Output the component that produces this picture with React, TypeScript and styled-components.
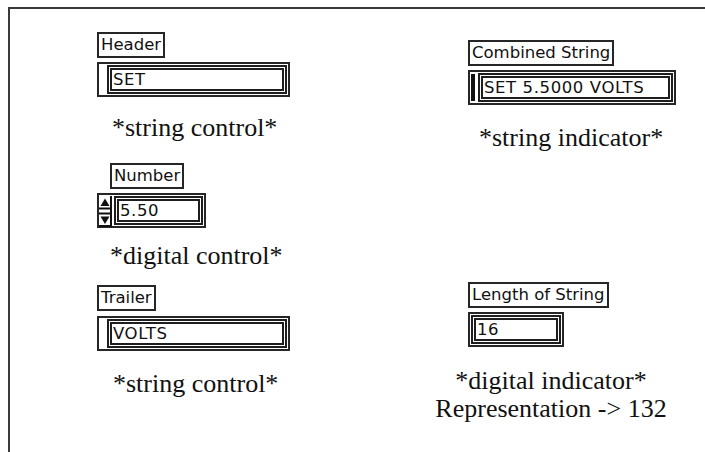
import React from "react";
import styled, { createGlobalStyle } from "styled-components";

const Global = createGlobalStyle`
  html, body { margin: 0; padding: 0; background: #ffffff; }
  body { width: 705px; height: 452px; overflow: hidden; }
`;

const Frame = styled.div`
  margin: 7px 0 0 8px;
  height: 445px;
  box-sizing: border-box;
  border-top: 2px solid #3a3a3a;
  border-left: 2px solid #3a3a3a;
  display: flex;
  align-items: flex-start;
`;

const Column = styled.div<{ $left: number; $width: number }>`
  margin-left: ${(p) => p.$left}px;
  width: ${(p) => p.$width}px;
  display: flex;
  flex-direction: column;
  align-items: flex-start;
`;

const Label = styled.div<{ $top: number; $indent?: number }>`
  margin-top: ${(p) => p.$top}px;
  margin-left: ${(p) => p.$indent ?? 0}px;
  border: 2px solid #262626;
  padding: 0 2px;
  height: 22px;
  line-height: 22px;
  font-family: "DejaVu Sans", sans-serif;
  font-size: 16.5px;
  color: #111;
  white-space: nowrap;
`;

const Field = styled.div<{ $top: number; $width: number; $padLeft: number }>`
  margin-top: ${(p) => p.$top}px;
  width: ${(p) => p.$width}px;
  height: 35px;
  box-sizing: border-box;
  border: 2px solid #262626;
  padding: 1px 1px 1px ${(p) => p.$padLeft}px;
  display: flex;
  align-items: stretch;
`;

const Display = styled.div`
  flex: 1;
  border: 5px double #1e1e1e;
  padding-left: 1px;
  font-family: "DejaVu Sans", sans-serif;
  font-size: 16.5px;
  line-height: 19px;
  letter-spacing: 0.6px;
  color: #111;
  white-space: nowrap;
  overflow: hidden;
`;

const IndicatorBar = styled.div`
  width: 4px;
  margin: 1px 3px 1px 0;
  background: #111;
`;

const Arrows = styled.svg`
  width: 13px;
  height: 31px;
  margin-right: 2px;
  flex: none;
`;

const Caption = styled.div<{ $top: number; $indent?: number }>`
  margin-top: ${(p) => p.$top}px;
  margin-left: ${(p) => p.$indent ?? 0}px;
  font-family: "Liberation Serif", "Times New Roman", serif;
  font-size: 26px;
  line-height: 28px;
  color: #111;
  white-space: nowrap;
`;

const CenteredCaption = styled(Caption)`
  width: 232px;
  text-align: center;
`;

function IncDec() {
  return (
    <Arrows viewBox="0 0 13 31">
      <rect x="11" y="0" width="2" height="31" fill="#111" />
      <polygon points="1.5,10 6,2.5 10.5,10" fill="#111" />
      <rect x="0" y="11.5" width="11" height="2" fill="#111" />
      <rect x="0" y="16.5" width="11" height="2" fill="#111" />
      <polygon points="1.5,20.5 10.5,20.5 6,28" fill="#111" />
      <rect x="0" y="29" width="11" height="2" fill="#111" />
    </Arrows>
  );
}

export default function App() {
  return (
    <>
      <Global />
      <Frame>
        <Column $left={87} $width={210}>
          <Label $top={23}>Header</Label>
          <Field $top={4} $width={193} $padLeft={8}>
            <Display>SET</Display>
          </Field>
          <Caption $top={17} $indent={15}>*string control*</Caption>

          <Label $top={21} $indent={13}>Number</Label>
          <Field $top={4} $width={109} $padLeft={0}>
            <IncDec />
            <Display>5.50</Display>
          </Field>
          <Caption $top={14} $indent={13}>*digital control*</Caption>

          <Label $top={15}>Trailer</Label>
          <Field $top={5} $width={193} $padLeft={8}>
            <Display>VOLTS</Display>
          </Field>
          <Caption $top={19} $indent={16}>*string control*</Caption>
        </Column>

        <Column $left={161} $width={230}>
          <Label $top={31}>Combined String</Label>
          <Field $top={4} $width={208} $padLeft={1}>
            <IndicatorBar />
            <Display>SET 5.5000 VOLTS</Display>
          </Field>
          <Caption $top={19} $indent={11}>*string indicator*</Caption>

          <Label $top={130}>Length of String</Label>
          <Field $top={4} $width={96} $padLeft={1}>
            <Display>16</Display>
          </Field>
          <CenteredCaption $top={20} $indent={-33}>
            *digital indicator*
            <br />
            Representation -&gt; 132
          </CenteredCaption>
        </Column>
      </Frame>
    </>
  );
}
